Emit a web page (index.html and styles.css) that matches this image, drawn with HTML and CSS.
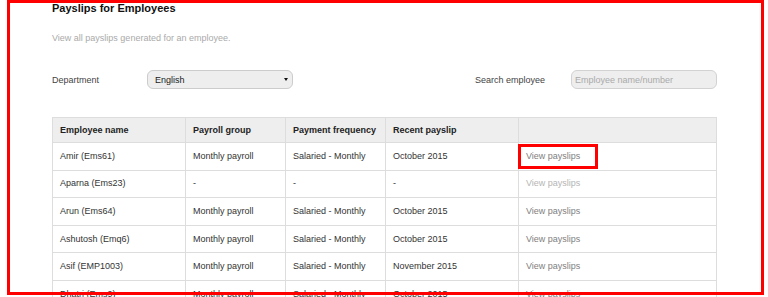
FILE: index.html
```html
<!DOCTYPE html>
<html lang="en">
<head>
  <meta charset="UTF-8">
  <meta name="viewport" content="width=device-width, initial-scale=1.0">
  <title>Payslips for Employees</title>
  <link rel="stylesheet" href="styles.css">
</head>
<body>
  <div class="page">
    <h1 class="title">Payslips for Employees</h1>
    <p class="intro">View all payslips generated for an employee.</p>

    <!-- Filters -->
    <div class="filters">
      <div class="filter">
        <label class="filter-label" for="department">Department</label>
        <div class="select-wrap">
          <select id="department" class="select">
            <option>English</option>
          </select>
        </div>
      </div>
      <div class="filter search">
        <label class="filter-label search-label" for="search">Search employee</label>
        <input type="text" id="search" class="input" placeholder="Employee name/number">
      </div>
    </div>

    <!-- Employees -->
    <table class="payslips">
      <thead>
        <tr>
          <th class="col-name">Employee name</th>
          <th class="col-group">Payroll group</th>
          <th class="col-freq">Payment frequency</th>
          <th class="col-recent">Recent payslip</th>
          <th class="col-link"></th>
        </tr>
      </thead>
      <tbody>
        <tr>
          <td>Amir (Ems61)</td>
          <td>Monthly payroll</td>
          <td>Salaried - Monthly</td>
          <td>October 2015</td>
          <td class="link-cell"><a href="#" class="view-link">View payslips</a><span class="highlight"></span></td>
        </tr>
        <tr>
          <td>Aparna (Ems23)</td>
          <td>-</td>
          <td>-</td>
          <td>-</td>
          <td class="link-cell"><a href="#" class="view-link disabled">View payslips</a></td>
        </tr>
        <tr>
          <td>Arun (Ems64)</td>
          <td>Monthly payroll</td>
          <td>Salaried - Monthly</td>
          <td>October 2015</td>
          <td class="link-cell"><a href="#" class="view-link">View payslips</a></td>
        </tr>
        <tr>
          <td>Ashutosh (Emq6)</td>
          <td>Monthly payroll</td>
          <td>Salaried - Monthly</td>
          <td>October 2015</td>
          <td class="link-cell"><a href="#" class="view-link">View payslips</a></td>
        </tr>
        <tr>
          <td>Asif (EMP1003)</td>
          <td>Monthly payroll</td>
          <td>Salaried - Monthly</td>
          <td>November 2015</td>
          <td class="link-cell"><a href="#" class="view-link">View payslips</a></td>
        </tr>
        <tr>
          <td>Dhatri (Ems9)</td>
          <td>Monthly payroll</td>
          <td>Salaried - Monthly</td>
          <td>October 2015</td>
          <td class="link-cell"><a href="#" class="view-link">View payslips</a></td>
        </tr>
      </tbody>
    </table>
  </div>

  <!-- annotation frame -->
  <div class="frame"></div>
</body>
</html>
```

FILE: styles.css
```css
html, body {
  margin: 0;
  height: 100%;
  overflow: hidden;
}
body {
  font-family: "Liberation Sans", Arial, sans-serif;
  font-size: 9px;
  color: #333;
  background: #fff;
}
.page {
  width: 665px;
  margin-left: 52px;
}
.title {
  margin: 0;
  font-size: 11px;
  line-height: 16px;
  font-weight: bold;
  color: #111;
}
.intro {
  margin: 16px 0 0;
  line-height: 12px;
  color: #aaa;
}
.filters {
  display: flex;
  align-items: center;
  margin-top: 26px;
}
.filter {
  display: flex;
  align-items: center;
}
.filter-label {
  width: 95px;
  color: #444;
}
.search {
  margin-left: auto;
}
.search-label {
  width: 96px;
}
.select-wrap {
  position: relative;
}
.select-wrap::after {
  content: "";
  position: absolute;
  right: 5px;
  top: 8px;
  border-left: 2px solid transparent;
  border-right: 2px solid transparent;
  border-top: 3px solid #111;
}
.select {
  -webkit-appearance: none;
  appearance: none;
  width: 146px;
  height: 19px;
  padding: 0 7px;
  font-family: inherit;
  font-size: 9px;
  color: #222;
  background: #eee;
  border: 1px solid #ccc;
  border-radius: 6px;
  outline: none;
}
.input {
  box-sizing: border-box;
  width: 146px;
  height: 19px;
  padding: 0 3px;
  font-family: inherit;
  font-size: 9px;
  background: #eee;
  border: 1px solid #d2d2d2;
  border-radius: 6px;
  outline: none;
}
.input::placeholder {
  color: #aaa;
}
.payslips {
  width: 665px;
  margin-top: 28px;
  border-collapse: collapse;
  table-layout: fixed;
}
.payslips th,
.payslips td {
  box-sizing: border-box;
  border: 1px solid #ddd;
  padding: 0 7px;
  text-align: left;
  line-height: 11px;
}
.payslips th {
  height: 25px;
  background: #eee;
  font-weight: bold;
  color: #222;
}
.payslips td {
  height: 27.6px;
}
.col-name { width: 133px; }
.col-group { width: 100px; }
.col-freq { width: 100px; }
.col-recent { width: 133px; }
.link-cell {
  position: relative;
}
.view-link {
  color: #808080;
  text-decoration: none;
}
.view-link.disabled {
  color: #b5b5b5;
}
.highlight {
  position: absolute;
  left: -1px;
  top: 1px;
  width: 80px;
  height: 25px;
  box-sizing: border-box;
  border: 3px solid #f00;
}
.frame {
  position: absolute;
  left: 7px;
  top: 0;
  width: 757px;
  height: 295px;
  box-sizing: border-box;
  border: 3px solid #f00;
  pointer-events: none;
}
```
